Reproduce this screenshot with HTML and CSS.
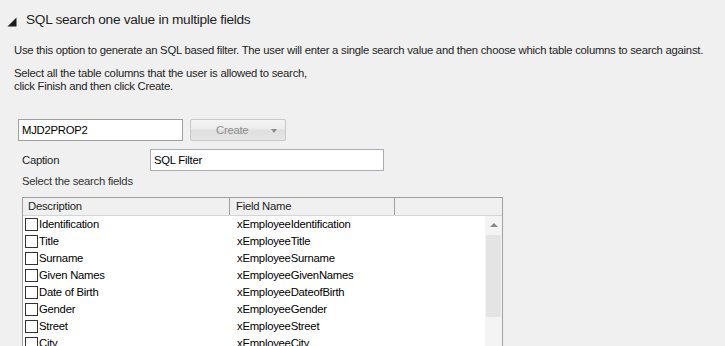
FILE: index.html
```html
<html lang="en">

<head>
  <title>SQL search one value in multiple fields</title>
  <link rel="stylesheet" href="styles.css">
</head>

<body>

  <div class="section-head">
    <svg class="twisty" width="10" height="10" viewBox="0 0 10 10"><polygon points="9.5,0.5 9.5,9.5 0.5,9.5" fill="#1b1b1b" /></svg>
    <span class="section-title">SQL search one value in multiple fields</span>
  </div>

  <p class="intro first">Use this option to generate an SQL based filter. The user will enter a single search value and then choose which table columns to search against.</p>
  <p class="intro">Select all the table columns that the user is allowed to search,<br />click Finish and then click Create.</p>

  <div class="name-row">
    <div class="textbox name">MJD2PROP2</div>
    <div class="create">Create<span class="drop"></span></div>
  </div>

  <div class="caption-row">
    <span class="caption-label">Caption</span>
    <div class="textbox caption">SQL Filter</div>
  </div>

  <div class="hint">Select the search fields</div>

  <div class="grid">
    <div class="grid-head">
      <div class="hcell desc">Description</div>
      <div class="hcell field">Field Name</div>
      <div class="hcell rest"></div>
    </div>
    <div class="grid-body">
      <div class="rows" id="rows"></div>
      <div class="vscroll">
        <div class="up"><span class="arrow"></span></div>
        <div class="thumb"></div>
      </div>
    </div>
  </div>

  <script>
    var fields = [
      ["Identification", "xEmployeeIdentification"],
      ["Title", "xEmployeeTitle"],
      ["Surname", "xEmployeeSurname"],
      ["Given Names", "xEmployeeGivenNames"],
      ["Date of Birth", "xEmployeeDateofBirth"],
      ["Gender", "xEmployeeGender"],
      ["Street", "xEmployeeStreet"],
      ["City", "xEmployeeCity"]
    ];

    document.getElementById("rows").innerHTML = fields.map(f =>
      `<div class="row"><div class="cell desc"><span class="check"></span>${f[0]}</div><div class="cell field">${f[1]}</div></div>`
    ).join("");
  </script>
</body>

</html>
```

FILE: styles.css
```css
body {
  font-family: 'Liberation Sans', Arial, sans-serif;
  font-size: 11.3px;
  letter-spacing: -0.25px;
  color: #000;
  background-color: #f0f0f0;
  margin: 0;
  padding: 0;
  overflow: hidden;
}

.section-head {
  display: flex;
  align-items: center;
  padding: 10px 0 0 7px;
  height: 20px;
}

.twisty {
  margin-right: 9px;
  margin-top: 3px;
}

.section-title {
  font-size: 13.7px;
  letter-spacing: -0.3px;
  line-height: 20px;
  color: #1e1e1e;
}

.intro {
  margin: 10px 0 0 14px;
  line-height: 13px;
  white-space: nowrap;
  color: #1e1e1e;
}

.intro.first {
  margin-top: 14px;
}

.name-row {
  display: flex;
  gap: 7px;
  margin: 26px 0 0 18px;
}

.textbox {
  box-sizing: border-box;
  height: 22px;
  line-height: 20px;
  padding-left: 3px;
  background-color: #fff;
  border: 1px solid #abadb3;
  color: #000;
}

.textbox.name {
  width: 165px;
  border-color: #a0a0a0;
}

.create {
  box-sizing: border-box;
  width: 96px;
  height: 22px;
  line-height: 20px;
  padding-left: 25px;
  border: 1px solid #c8c8c8;
  border-radius: 2px;
  background: linear-gradient(#f4f4f4, #ececec 45%, #dedede 50%, #e6e6e6);
  color: #8d8d8d;
  position: relative;
}

.drop {
  position: absolute;
  right: 8px;
  top: 9px;
  border-left: 3px solid transparent;
  border-right: 3px solid transparent;
  border-top: 4px solid #8d8d8d;
}

.caption-row {
  display: flex;
  align-items: center;
  margin: 8px 0 0 22px;
}

.caption-label {
  width: 128px;
  color: #1e1e1e;
}

.textbox.caption {
  width: 234px;
}

.hint {
  margin: 4px 0 0 22px;
  line-height: 13px;
  color: #333;
}

.grid {
  width: 481px;
  margin: 9px 0 0 22px;
  border: 1px solid #a0a0a0;
  border-bottom: none;
  box-sizing: border-box;
}

.grid-head {
  display: flex;
  height: 17px;
  line-height: 16px;
  border-bottom: 1px solid #d5d5d5;
  background-color: #f0f0f0;
}

.hcell {
  box-sizing: border-box;
  border-right: 1px solid #a0a0a0;
  color: #1e1e1e;
}

.hcell.desc {
  width: 207px;
  padding-left: 5px;
}

.hcell.field {
  width: 165px;
  padding-left: 6px;
}

.hcell.rest {
  flex: 1;
  border-right: none;
}

.grid-body {
  display: flex;
  height: 140px;
  background-color: #fff;
}

.rows {
  flex: 1;
}

.row {
  display: flex;
  height: 17px;
  line-height: 17px;
}

.cell.desc {
  width: 207px;
  display: flex;
  align-items: center;
  padding-left: 2px;
  box-sizing: border-box;
}

.cell.field {
  padding-left: 7px;
}

.check {
  box-sizing: border-box;
  width: 13px;
  height: 13px;
  border: 1px solid #333;
  background-color: #fff;
  margin-right: 1px;
}

.vscroll {
  width: 17px;
  background-color: #f4f4f4;
  display: flex;
  flex-direction: column;
  align-items: center;
}

.up {
  height: 18px;
  width: 17px;
  display: flex;
  align-items: center;
  justify-content: center;
}

.arrow {
  border-left: 4px solid transparent;
  border-right: 4px solid transparent;
  border-bottom: 4px solid #868686;
}

.thumb {
  width: 15px;
  height: 82px;
  margin-top: 1px;
  border-radius: 2px;
  background-color: #e4e4e4;
}
```
